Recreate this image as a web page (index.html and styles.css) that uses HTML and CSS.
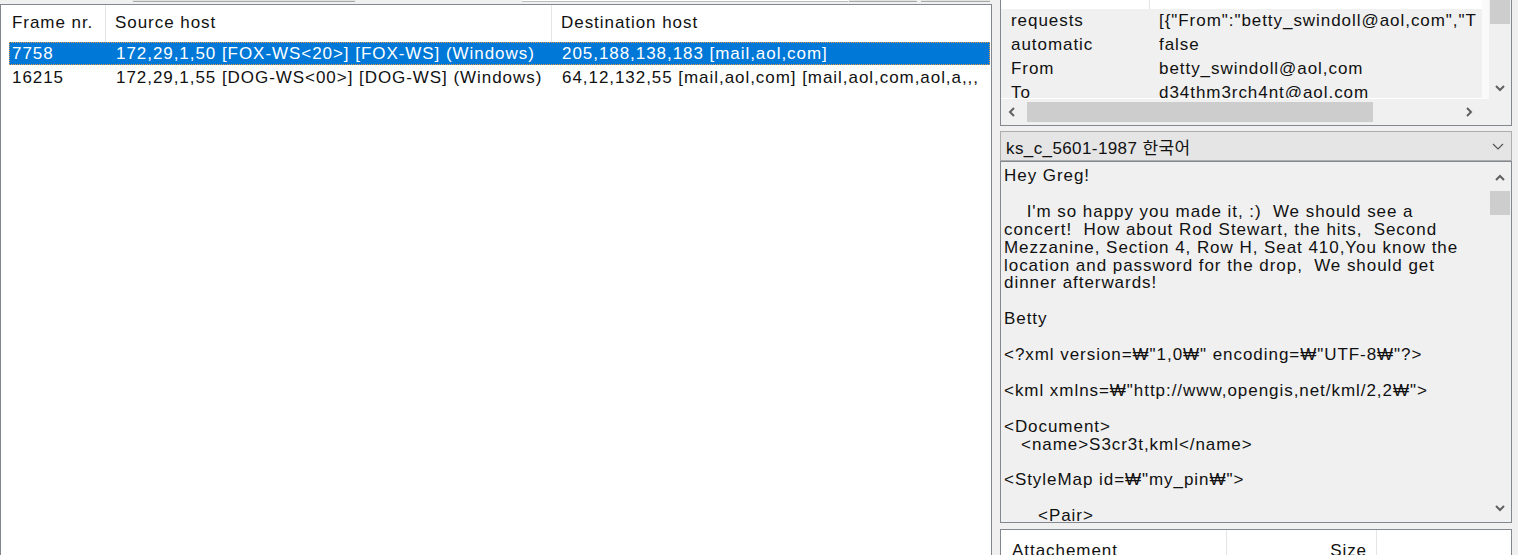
FILE: index.html
```html
<!DOCTYPE html>
<html lang="ko">
<head>
<meta charset="utf-8">
<title>Mail viewer</title>
<link rel="stylesheet" href="styles.css">
</head>
<body>
<div class="app">
  <div class="left">
    <div class="toolbar">
      <span class="tb tb1"></span>
      <span class="tb tb2"></span>
      <span class="tb tb3"></span>
      <span class="tb tb4"></span>
    </div>
    <div class="list">
      <div class="lhead">
        <div class="hc c1">Frame nr.</div>
        <div class="hc c2">Source host</div>
        <div class="hc c3">Destination host</div>
      </div>
      <div class="row sel">
        <div class="cell c1">7758</div>
        <div class="cell c2">172,29,1,50 [FOX-WS&lt;20&gt;] [FOX-WS] (Windows)</div>
        <div class="cell c3">205,188,138,183 [mail,aol,com]</div>
      </div>
      <div class="row">
        <div class="cell c1">16215</div>
        <div class="cell c2">172,29,1,55 [DOG-WS&lt;00&gt;] [DOG-WS] (Windows)</div>
        <div class="cell c3">64,12,132,55 [mail,aol,com] [mail,aol,com,aol,a,,,</div>
      </div>
    </div>
  </div>

  <div class="right">
    <div class="props">
      <div class="props-main">
        <div class="props-body">
          <div class="phead"><span class="ph1"></span><span class="ph2"></span></div>
          <div class="prow"><span class="pk">requests</span><span class="pv">[{"From":"betty_swindoll@aol,com","T</span></div>
          <div class="prow"><span class="pk">automatic</span><span class="pv">false</span></div>
          <div class="prow"><span class="pk">From</span><span class="pv">betty_swindoll@aol,com</span></div>
          <div class="prow"><span class="pk">To</span><span class="pv">d34thm3rch4nt@aol,com</span></div>
        </div>
        <div class="gutter"></div>
        <div class="vscroll">
          <div class="thumb top-thumb"></div>
          <div class="vspace"></div>
          <svg class="arrow" width="22" height="22" viewBox="0 0 22 22"><polyline points="7,9 11,13 15,9" fill="none" stroke="#606060" stroke-width="2"/></svg>
        </div>
      </div>
      <div class="hscroll">
        <svg class="arrow" width="22" height="24" viewBox="0 0 22 24"><polyline points="13,8 9,12 13,16" fill="none" stroke="#606060" stroke-width="2"/></svg>
        <div class="hthumb"></div>
        <div class="hspace"></div>
        <svg class="arrow" width="22" height="24" viewBox="0 0 22 24"><polyline points="9,8 13,12 9,16" fill="none" stroke="#606060" stroke-width="2"/></svg>
        <div class="corner"></div>
      </div>
    </div>

    <div class="combo">
      <span class="combo-text">ks_c_5601-1987 한국어</span>
      <svg class="combo-arrow" width="14" height="10" viewBox="0 0 14 10"><polyline points="2,3 7,8 12,3" fill="none" stroke="#555" stroke-width="1.2"/></svg>
    </div>

    <div class="memo">
      <div class="memo-text">
        <div class="ln">Hey Greg!</div>
        <div class="ln">&nbsp;</div>
        <div class="ln">&nbsp;&nbsp;&nbsp;&nbsp;I'm so happy you made it, :)&nbsp; We should see a</div>
        <div class="ln">concert!&nbsp; How about Rod Stewart, the hits,&nbsp; Second</div>
        <div class="ln">Mezzanine, Section 4, Row H, Seat 410,You know the</div>
        <div class="ln">location and password for the drop,&nbsp; We should get</div>
        <div class="ln">dinner afterwards!</div>
        <div class="ln">&nbsp;</div>
        <div class="ln">Betty</div>
        <div class="ln">&nbsp;</div>
        <div class="ln">&lt;?xml version=₩"1,0₩" encoding=₩"UTF-8₩"?&gt;</div>
        <div class="ln">&nbsp;</div>
        <div class="ln">&lt;kml xmlns=₩"http://www,opengis,net/kml/2,2₩"&gt;</div>
        <div class="ln">&nbsp;</div>
        <div class="ln">&lt;Document&gt;</div>
        <div class="ln">&nbsp;&nbsp;&nbsp;&lt;name&gt;S3cr3t,kml&lt;/name&gt;</div>
        <div class="ln">&nbsp;</div>
        <div class="ln">&lt;StyleMap id=₩"my_pin₩"&gt;</div>
        <div class="ln">&nbsp;</div>
        <div class="ln">&nbsp;&nbsp;&nbsp;&nbsp;&nbsp;&nbsp;&lt;Pair&gt;</div>
      </div>
      <div class="vscroll memo-scroll">
        <svg class="arrow" width="22" height="22" viewBox="0 0 22 22"><polyline points="7,13 11,9 15,13" fill="none" stroke="#606060" stroke-width="2"/></svg>
        <div class="thumb memo-thumb"></div>
        <div class="vspace"></div>
        <svg class="arrow" width="22" height="22" viewBox="0 0 22 22"><polyline points="7,9 11,13 15,9" fill="none" stroke="#606060" stroke-width="2"/></svg>
      </div>
    </div>

    <div class="attach">
      <div class="ahead">
        <div class="ac a1">Attachement</div>
        <div class="ac a2">Size</div>
        <div class="ac a3"></div>
      </div>
    </div>
  </div>
</div>
</body>
</html>
```

FILE: styles.css
```css
* { box-sizing: border-box; }

html, body {
  margin: 0;
  padding: 0;
  background: #f0f0f0;
  overflow: hidden;
  width: 1518px;
  height: 555px;
}

body {
  font-family: "Liberation Sans", "Noto Sans CJK KR", sans-serif;
  font-size: 17px;
  letter-spacing: 0.95px;
  color: #111;
}

.app {
  display: flex;
  height: 580px;
  gap: 8px;
}

/* ---------- left: frame list ---------- */
.left {
  width: 992px;
  display: flex;
  flex-direction: column;
}

.toolbar {
  height: 4px;
  display: flex;
  align-items: flex-start;
  overflow: hidden;
}

.tb {
  height: 2px;
  border-bottom: 1px solid #a8a8a8;
  background: #e4e4e4;
}
.tb1 { margin-left: 133px; width: 222px; }
.tb2 { margin-left: 167px; width: 326px; background: #fff; border-bottom-color: #bcbcbc; }
.tb3 { margin-left: 1px; width: 68px; }
.tb4 { margin-left: 4px; width: 69px; }

.list {
  flex: 1;
  background: #fff;
  border: 1px solid #828790;
}

.lhead {
  display: flex;
  height: 37px;
  align-items: stretch;
}

.hc {
  display: flex;
  align-items: center;
  padding-left: 11px;
  padding-bottom: 2px;
  border-right: 1px solid #e5e5e5;
}
.lhead .c1 { width: 105px; }
.lhead .c2 { width: 446px; padding-left: 9px; }
.lhead .c3 { flex: 1; border-right: 0; padding-left: 9px; }

.row {
  display: flex;
  height: 24px;
  align-items: center;
  margin-left: 8px;
  margin-right: 1px;
}
.row.sel {
  background: #0078d7;
  color: #fff;
  height: 23px;
  margin-bottom: 1px;
  outline: 1px dotted #e39a4a;
  outline-offset: -1px;
}
.cell { white-space: nowrap; overflow: hidden; }
.row .c1 { width: 98px; padding-left: 3px; }
.row .c2 { width: 446px; padding-left: 9px; }
.row .c3 { flex: 1; padding-left: 9px; }

/* ---------- right column ---------- */
.right {
  width: 512px;
  display: flex;
  flex-direction: column;
}

.props {
  height: 126px;
  border: 1px solid #828790;
  border-top: 0;
  background: #fff;
  display: flex;
  flex-direction: column;
}

.props-main {
  display: flex;
  height: 99px;
}

.props-body {
  width: 481px;
  background: #f0f0f0;
  overflow: hidden;
  border-bottom: 1px solid #fff;
}

.phead {
  height: 9px;
  background: #fff;
  display: flex;
}
.ph1 { width: 149px; border-right: 1px solid #e5e5e5; }

.prow {
  height: 24px;
  display: flex;
  align-items: center;
  white-space: nowrap;
}
.pk { width: 149px; padding-left: 10px; flex: none; }
.pv { padding-left: 9px; }

.gutter {
  width: 7px;
  background: #fafafa;
}

.vscroll {
  width: 22px;
  background: #f0f0f0;
  display: flex;
  flex-direction: column;
  align-items: center;
}
.vspace { flex: 1; }
.thumb {
  width: 20px;
  background: #cdcdcd;
}
.top-thumb { height: 24px; }
.arrow { display: block; flex: none; }

.hscroll {
  flex: 1;
  display: flex;
  align-items: center;
  background: #f0f0f0;
}
.hthumb {
  width: 346px;
  height: 20px;
  background: #cdcdcd;
  margin-left: 4px;
}
.hspace { flex: 1; }
.corner { width: 31px; align-self: stretch; background: #f0f0f0; }

/* ---------- combo ---------- */
.combo {
  margin-top: 5px;
  height: 30px;
  border: 1px solid #adadad;
  background: #e5e5e5;
  display: flex;
  align-items: center;
  padding-left: 5px;
  padding-right: 6px;
}
.combo-text { flex: 1; letter-spacing: 0.4px; }

/* ---------- memo ---------- */
.memo {
  height: 362px;
  border: 1px solid #828790;
  background: #f0f0f0;
  display: flex;
  overflow: hidden;
}
.memo-text {
  flex: 1;
  padding: 5px 0 0 3px;
  line-height: 17.9px;
  white-space: nowrap;
  overflow: hidden;
}
.memo-scroll {
  padding-top: 5px;
  padding-bottom: 3px;
}
.memo-thumb { height: 24px; margin-top: 2px; }

/* ---------- attachments ---------- */
.attach {
  margin-top: 6px;
  flex: 1;
  border: 1px solid #828790;
  background: #fff;
}
.ahead {
  display: flex;
  height: 34px;
}
.ac {
  display: flex;
  align-items: center;
  padding-top: 8px;
}
.a1 { width: 226px; padding-left: 11px; border-right: 1px solid #e5e5e5; }
.a2 { width: 150px; justify-content: flex-end; padding-right: 9px; border-right: 1px solid #e5e5e5; }
.a3 { flex: 1; }
```
